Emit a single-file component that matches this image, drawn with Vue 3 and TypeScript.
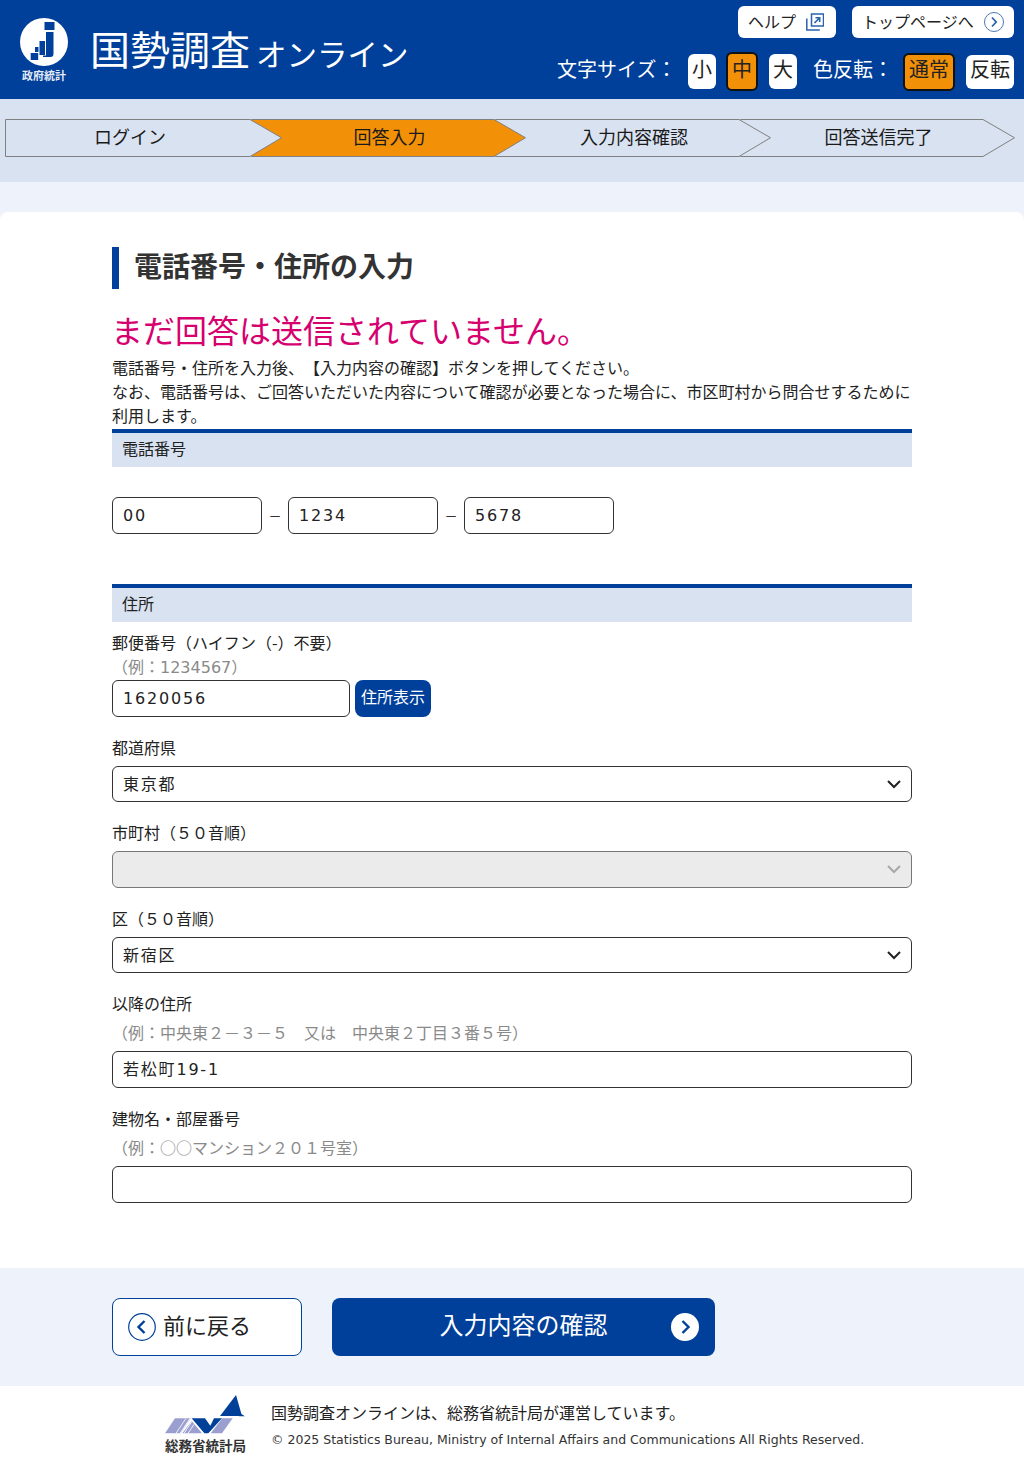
<script setup lang="ts">
interface Step { label: string; width: number; active?: boolean }
const steps: Step[] = [
  { label: 'ログイン', width: 277 },
  { label: '回答入力', width: 275, active: true },
  { label: '入力内容確認', width: 276 },
  { label: '回答送信完了', width: 275 },
]
const points = (w: number) => `0.5,0.5 ${w - 32},0.5 ${w - 0.5},18.75 ${w - 32},37.5 0.5,37.5`
</script>

<template>
  <div class="page">
    <header class="header">
      <div class="brand">
        <div class="gov">
          <svg class="gov-mark" width="48" height="48" viewBox="20 18 48 48">
            <circle cx="44" cy="42" r="24" fill="#fff" />
            <g fill="#00409a">
              <rect x="44.500" y="22" width="10" height="8" />
              <path d="M46 32h7.500v22q0 3-3 3h-7.500v-1.500h3z" />
              <rect x="39.500" y="41" width="5.500" height="14" />
              <rect x="35" y="47" width="3.500" height="5" />
              <rect x="30.700" y="53" width="7.500" height="7" />
            </g>
          </svg>
          <span class="gov-label">政府統計</span>
        </div>
        <div class="title"><span class="title-main">国勢調査</span><span class="title-sub">オンライン</span></div>
      </div>
      <div class="tools">
        <div class="links">
          <a class="link link-help">
            <span>ヘルプ</span>
            <svg width="18" height="18" viewBox="0 0 18 18" fill="none" stroke="#2a62ad">
              <rect x="5.500" y="1" width="12" height="12" stroke-width="1.500" />
              <path d="M.8 5.500v11.500h13" stroke-width="1.500" />
              <path d="M8.500 10l5-5M9.500 4.800h4.200v4.200" stroke-width="1.600" />
            </svg>
          </a>
          <a class="link link-top">
            <span>トップページへ</span>
            <svg width="20" height="20" viewBox="0 0 20 20" fill="none">
              <circle cx="10" cy="10" r="9.500" stroke="#4a78b8" />
              <path d="M8 5.500l4.200 4.500L8 14.500" stroke="#2a62ad" stroke-width="1.800" />
            </svg>
          </a>
        </div>
        <div class="switches">
          <span class="switch-label">文字サイズ：</span>
          <button class="sw sw-size">小</button>
          <button class="sw sw-on sw-mid">中</button>
          <button class="sw sw-size sw-large">大</button>
          <span class="switch-label color-label">色反転：</span>
          <button class="sw sw-on sw-normal">通常</button>
          <button class="sw sw-invert">反転</button>
        </div>
      </div>
    </header>

    <div class="steps-band">
      <div class="steps">
        <div
          v-for="(s, i) in steps"
          :key="s.label"
          class="step"
          :class="{ first: i === 0 }"
          :style="{ width: s.width + 'px', zIndex: 4 - i }"
        >
          <svg class="step-shape" :width="s.width" height="38" :viewBox="`0 0 ${s.width} 38`">
            <polygon :points="points(s.width)" :fill="s.active ? '#f29108' : '#d9e2f1'" stroke="#808080" />
          </svg>
          <span class="step-label">{{ s.label }}</span>
        </div>
      </div>
    </div>

    <div class="gap-band"></div>

    <main class="card">
      <h1 class="heading">電話番号・住所の入力</h1>
      <p class="notice">まだ回答は送信されていません。</p>
      <p class="lead">電話番号・住所を入力後、【入力内容の確認】ボタンを押してください。<br />なお、電話番号は、ご回答いただいた内容について確認が必要となった場合に、市区町村から問合せするために<br />利用します。</p>

      <h2 class="section">電話番号</h2>
      <div class="tel-row">
        <input class="input tel" value="00" />
        <span class="dash">－</span>
        <input class="input tel" value="1234" />
        <span class="dash">－</span>
        <input class="input tel" value="5678" />
      </div>

      <h2 class="section section-address">住所</h2>
      <div class="first-field">
        <div class="label">郵便番号（ハイフン（-）不要）</div>
        <div class="hint hint-latin">（例：1234567）</div>
        <div class="zip-row">
          <input class="input zip" value="1620056" />
          <button class="zip-btn">住所表示</button>
        </div>
      </div>

      <div class="field">
        <label class="label">都道府県</label>
        <div class="select-wrap">
          <select class="select h36"><option>東京都</option></select>
          <svg class="chev" width="14" height="9" viewBox="0 0 14 9" fill="none"><path d="M1 1l6 6 6-6" stroke="#222" stroke-width="2" /></svg>
        </div>
      </div>

      <div class="field">
        <label class="label">市町村（５０音順）</label>
        <div class="select-wrap">
          <select class="select" disabled><option></option></select>
          <svg class="chev" width="14" height="9" viewBox="0 0 14 9" fill="none"><path d="M1 1l6 6 6-6" stroke="#a8a8a8" stroke-width="2" /></svg>
        </div>
      </div>

      <div class="field">
        <label class="label">区（５０音順）</label>
        <div class="select-wrap">
          <select class="select h36"><option>新宿区</option></select>
          <svg class="chev" width="14" height="9" viewBox="0 0 14 9" fill="none"><path d="M1 1l6 6 6-6" stroke="#222" stroke-width="2" /></svg>
        </div>
      </div>

      <div class="field">
        <label class="label">以降の住所</label>
        <div class="hint hint-spaced">（例：中央東２－３－５　又は　中央東２丁目３番５号）</div>
        <input class="input wide" value="若松町19-1" />
      </div>

      <div class="field">
        <label class="label">建物名・部屋番号</label>
        <div class="hint hint-spaced">（例：○○マンション２０１号室）</div>
        <input class="input wide" value="" />
      </div>
    </main>

    <div class="actions">
      <button class="back">
        <svg width="28" height="28" viewBox="0 0 28 28" fill="none">
          <circle cx="14" cy="14" r="13.300" stroke="#004098" stroke-width="1.200" />
          <path d="M16.500 8l-6 6 6 6" stroke="#004098" stroke-width="2.400" />
        </svg>
        <span class="btn-text">前に戻る</span>
      </button>
      <button class="next">
        <span class="btn-text">入力内容の確認</span>
        <svg class="next-icon" width="28" height="28" viewBox="0 0 28 28" fill="none">
          <circle cx="14" cy="14" r="14" fill="#fff" />
          <path d="M11.500 8l6 6-6 6" stroke="#004098" stroke-width="2.400" />
        </svg>
      </button>
    </div>

    <footer class="footer">
      <div class="stat">
        <svg width="80" height="39" viewBox="45 30 240 117">
          <path d="M258 30l18 63h-66z" fill="#004098" />
          <path d="M270 85l15 9h-18z" fill="#004098" />
          <path d="M45 145l30-45h47l-30 45z" fill="#9a9fd0" />
          <path d="M125 108l31 37H97z" fill="#9a9fd0" />
          <path d="M78 145l30-45M90 145l30-45M102 145l24-36M114 145l18-27" stroke="#fff" stroke-width="2.500" />
          <path d="M125 100h40l16 22 11-22h24l-41 45h-12z" fill="#004098" />
          <path d="M217 100h31l-32 45h-34z" fill="#9a9fd0" />
        </svg>
        <span class="stat-label">総務省統計局</span>
      </div>
      <div class="foot-text">
        <p class="foot-main">国勢調査オンラインは、総務省統計局が運営しています。</p>
        <p class="foot-copy">© 2025 Statistics Bureau, Ministry of Internal Affairs and Communications All Rights Reserved.</p>
      </div>
    </footer>
  </div>
</template>

<style scoped>
.page {
  width: 1024px;
  height: 1468px;
  overflow: hidden;
  background: #eef3fb;
  color: #222;
  font-family: "Noto Sans CJK JP", "Noto Sans", sans-serif;
  font-size: 16px;
  line-height: 24px;
  text-spacing-trim: space-all;
}
p, h1, h2 { margin: 0; }
button { font-family: inherit; padding: 0; cursor: pointer; }

.header {
  height: 99px;
  background: #00409a;
  display: flex;
  justify-content: space-between;
  color: #fff;
}
.brand { display: flex; padding: 18px 0 0 20px; }
.gov { width: 48px; display: flex; flex-direction: column; align-items: center; }
.gov-mark { display: block; }
.gov-label { font-size: 11px; font-weight: 700; line-height: 14px; margin-top: 2px; white-space: nowrap; color: #e6ecf6; }
.title { margin-left: 22px; display: flex; align-items: baseline; height: 60px; white-space: nowrap; }
.title-main { font-size: 40px; line-height: 60px; }
.title-sub { font-size: 30.500px; line-height: 60px; margin-left: 6px; position: relative; top: 1px; }

.tools { display: flex; flex-direction: column; align-items: flex-end; padding: 6px 10px 0 0; }
.links { display: flex; gap: 16px; }
.link {
  height: 32px;
  background: #fff;
  border-radius: 6px;
  display: flex;
  align-items: center;
  color: #222;
  font-size: 16px;
  white-space: nowrap;
}
.link span { padding-bottom: 2px; }
.link-help { width: 98px; padding-left: 10px; gap: 10px; box-sizing: border-box; }
.link-top { width: 162px; padding-left: 10px; gap: 10px; box-sizing: border-box; }

.switches { display: flex; align-items: center; height: 39px; margin-top: 14px; }
.switch-label { font-size: 20px; line-height: 30px; white-space: nowrap; width: 131px; padding-bottom: 5px; }
.color-label { width: 90px; margin-left: 16px; }
.sw {
  font-size: 20px;
  line-height: 28px;
  background: #fff;
  color: #222;
  border: 0;
  border-radius: 6px;
  box-sizing: border-box;
  padding-bottom: 5px;
}
.sw-size { width: 28px; height: 35px; }
.sw-large { margin-left: 11px; }
.sw-mid { width: 32px; height: 39px; margin-left: 10px; }
.sw-on { background: #f29108; border: 2px solid #111; }
.sw-normal { width: 52px; height: 38px; }
.sw-invert { width: 48px; height: 34px; margin-left: 11px; }

.steps-band { height: 83px; background: #d9e2f1; padding: 20px 0 0 5px; box-sizing: border-box; }
.steps { display: flex; height: 38px; }
.step { position: relative; height: 38px; display: flex; align-items: center; justify-content: center; margin-left: -31px; flex: none; padding-left: 2px; box-sizing: border-box; }
.step.first { margin-left: 0; padding-left: 0; padding-right: 27px; }
.step-shape { position: absolute; left: 0; top: 0; }
.step-label { position: relative; font-size: 18px; line-height: 30px; padding-bottom: 4px; color: #1a1a1a; white-space: nowrap; }

.gap-band { height: 30px; }

.card {
  background: #fff;
  border-radius: 8px 8px 0 0;
  height: 1056px;
  box-sizing: border-box;
  padding: 35px 112px 0;
}

.heading {
  border-left: 7px solid #00409a;
  padding-left: 15px;
  font-size: 28px;
  font-weight: 700;
  line-height: 36px;
  height: 42px;
  color: #333;
  white-space: nowrap;
}
.notice { margin: 18px 0 0 -1px; font-size: 32px; line-height: 44px; height: 48px; color: #d6006f; white-space: nowrap; }
.lead { color: #222; white-space: nowrap; }

.section {
  margin-top: 2px;
  height: 38px;
  box-sizing: border-box;
  border-top: 4px solid #00409a;
  background: #d9e2f1;
  padding-left: 10px;
  font-size: 16px;
  font-weight: 400;
  line-height: 30px;
}
.section-address { margin-top: 50px; }

.tel-row { display: flex; align-items: center; margin-top: 30px; }
.dash { width: 26px; text-align: center; font-size: 13px; color: #333; }

.input {
  display: block;
  height: 37px;
  box-sizing: border-box;
  border: 1px solid #333;
  border-radius: 6px;
  padding: 0 10px;
  font-family: "DejaVu Sans", "Noto Sans CJK JP", sans-serif;
  font-size: 16px;
  letter-spacing: 1.800px;
  color: #222;
  background: #fff;
  outline: none;
  margin: 0;
}
.tel { width: 150px; }
.zip { width: 238px; }
.wide { width: 800px; margin-top: 6px; padding-bottom: 4px; }

.first-field { margin-top: 9px; }
.field { margin-top: 19px; }
.label { display: block; height: 24px; line-height: 22px; white-space: nowrap; color: #222; }
.hint { height: 24px; line-height: 22px; color: #8a8a8a; white-space: nowrap; }
.hint-latin { font-family: "DejaVu Sans", "Noto Sans CJK JP", sans-serif; line-height: 24px; margin-top: 1px; }
.hint-spaced { margin-top: 5px; }
.zip-row { display: flex; gap: 5px; }
.zip-btn {
  width: 76px;
  height: 37px;
  border: 0;
  border-radius: 8px;
  background: #00409a;
  color: #fff;
  font-size: 16px;
  line-height: 24px;
  padding-bottom: 6px;
  white-space: nowrap;
}

.select-wrap { position: relative; margin-top: 6px; }
.select {
  display: block;
  appearance: none;
  width: 800px;
  height: 37px;
  box-sizing: border-box;
  border: 1px solid #333;
  border-radius: 6px;
  background: #fff;
  padding: 0 10px 2px;
  font-family: "Noto Sans CJK JP", sans-serif;
  font-size: 16px;
  letter-spacing: 1.800px;
  color: #222;
  outline: none;
  margin: 0;
}
.h36 { height: 36px; }
.select:disabled { background: #ebebeb; border-color: #777; opacity: 1; }
.chev { position: absolute; right: 11px; top: 14px; pointer-events: none; }

.actions {
  height: 118px;
  box-sizing: border-box;
  padding: 30px 0 0 112px;
  display: flex;
  gap: 30px;
}
.back {
  width: 190px;
  height: 58px;
  box-sizing: border-box;
  background: #fff;
  border: 1px solid #004098;
  border-radius: 8px;
  display: flex;
  align-items: center;
  gap: 7px;
  padding-left: 15px;
  font-size: 22px;
  line-height: 32px;
  color: #222;
  white-space: nowrap;
}
.next {
  position: relative;
  width: 383px;
  height: 58px;
  border: 0;
  border-radius: 8px;
  background: #00409a;
  color: #fff;
  font-size: 24px;
  line-height: 32px;
  display: flex;
  align-items: center;
  justify-content: center;
  white-space: nowrap;
}
.btn-text { padding-bottom: 6px; }
.next-icon { position: absolute; left: 339px; top: 15px; }

.footer { height: 82px; background: #fff; display: flex; padding: 9px 0 0 165px; box-sizing: border-box; }
.stat { width: 81px; display: flex; flex-direction: column; flex: none; }
.stat svg { display: block; }
.stat-label { font-size: 13.500px; font-weight: 700; line-height: 16px; margin-top: 3px; white-space: nowrap; color: #333; }
.foot-text { margin-left: 25px; }
.foot-main { margin-top: 5px; line-height: 24px; color: #222; white-space: nowrap; }
.foot-copy { margin-top: 6px; font-family: "DejaVu Sans", "Noto Sans", sans-serif; font-size: 12.500px; line-height: 20px; color: #333; white-space: nowrap; }
</style>

<style>
html, body { margin: 0; background: #fff; }
</style>
